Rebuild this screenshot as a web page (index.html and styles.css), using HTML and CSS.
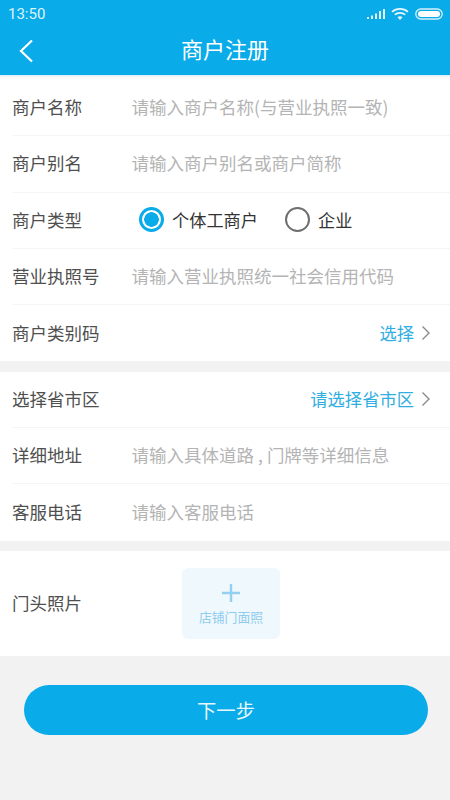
FILE: index.html
```html
<!DOCTYPE html>
<html lang="zh">
<head>
<meta charset="utf-8">
<title>商户注册</title>
<link rel="stylesheet" href="styles.css">
</head>
<body>
<header class="header">
  <div class="status">
    <span class="time">13:50</span>
    <div class="status-icons">
      <svg width="18" height="12" viewBox="0 0 18 12"><g fill="#dff3fb"><rect x="0" y="9" width="2" height="2"/><rect x="4" y="7.500" width="2" height="3.500"/><rect x="8" y="5.500" width="2" height="5.500"/><rect x="12" y="3" width="2" height="8"/><rect x="16" y="1" width="2" height="10"/></g></svg>
      <svg width="18" height="14" viewBox="0 0 18 14"><g fill="none" stroke="#e8f7fc" stroke-width="1.700"><path d="M1 4.800C5.500 .8 12.500 .8 17 4.800"/><path d="M3.800 7.700C6.700 5.200 11.300 5.200 14.200 7.700"/></g><path d="M6.500 10.300C8 9 10 9 11.500 10.300L9 13Z" fill="#e8f7fc"/></svg>
      <svg width="28" height="12" viewBox="0 0 28 12"><rect x=".8" y="1" width="26.400" height="10" rx="5" fill="none" stroke="#d5f0fa" stroke-width="1.300"/><rect x="3" y="3" width="22" height="6" rx="3" fill="#fff"/></svg>
    </div>
  </div>
  <div class="nav">
    <svg class="back" width="16" height="24" viewBox="0 0 16 24"><path d="M14 1.500 3 12l11 10.500" fill="none" stroke="#fff" stroke-width="2.200"/></svg>
    <h1 class="title">商户注册</h1>
  </div>
</header>
<div class="shade"></div>
<main>
  <section class="group">
    <div class="row"><span class="label">商户名称</span><span class="hint">请输入商户名称(与营业执照一致)</span></div>
    <div class="row"><span class="label">商户别名</span><span class="hint">请输入商户别名或商户简称</span></div>
    <div class="row">
      <span class="label">商户类型</span>
      <div class="radios">
        <span class="radio radio-on"></span><span class="radio-text">个体工商户</span>
        <span class="radio radio-off"></span><span class="radio-text">企业</span>
      </div>
    </div>
    <div class="row"><span class="label">营业执照号</span><span class="hint">请输入营业执照统一社会信用代码</span></div>
    <div class="row">
      <span class="label">商户类别码</span>
      <div class="pick"><span>选择</span><svg class="chev" width="10" height="16" viewBox="0 0 10 16"><path d="M1.500 1.500 8 8l-6.500 6.500" fill="none" stroke="#8a8a8a" stroke-width="1.400"/></svg></div>
    </div>
  </section>
  <section class="group">
    <div class="row">
      <span class="label">选择省市区</span>
      <div class="pick"><span>请选择省市区</span><svg class="chev" width="10" height="16" viewBox="0 0 10 16"><path d="M1.500 1.500 8 8l-6.500 6.500" fill="none" stroke="#8a8a8a" stroke-width="1.400"/></svg></div>
    </div>
    <div class="row"><span class="label">详细地址</span><span class="hint">请输入具体道路<span class="comma">,</span>门牌等详细信息</span></div>
    <div class="row"><span class="label">客服电话</span><span class="hint">请输入客服电话</span></div>
  </section>
  <section class="group photo">
    <span class="label">门头照片</span>
    <div class="upload">
      <svg width="18" height="18" viewBox="0 0 18 18"><path d="M9 0v18M0 9h18" stroke="#93cfee" stroke-width="2.400"/></svg>
      <span class="upload-text">店铺门面照</span>
    </div>
  </section>
  <button class="next" type="button">下一步</button>
</main>
</body>
</html>
```
FILE: styles.css
```css
* { box-sizing: border-box; }
html, body { margin: 0; padding: 0; }
body {
  width: 450px;
  height: 800px;
  overflow: hidden;
  background: #f2f2f2;
  font-family: "Noto Sans CJK SC", "Noto Sans", sans-serif;
}
.header { height: 75px; background: #09abe8; color: #fff; }
.status {
  height: 28px;
  padding: 0 7px 0 8px;
  display: flex;
  align-items: center;
  justify-content: space-between;
}
.time { font-family: Roboto, sans-serif; font-size: 15px; color: #dff3fb; }
.status-icons { display: flex; align-items: center; gap: 6px; }
.nav { height: 47px; position: relative; display: flex; align-items: center; justify-content: center; padding-bottom: 6px; }
.back { position: absolute; left: 18px; top: 11px; }
.title { margin: 0; font-size: 22px; font-weight: 400; line-height: 41px; }
.shade { height: 5px; background: linear-gradient(#d8eef8, #f8f8f8 40%, #fff); }
.group { background: #fff; margin-bottom: 10.500px; }
.row {
  height: 56.250px;
  margin-left: 12px;
  padding: 0 19px 2px 0;
  display: flex;
  align-items: center;
  border-bottom: 1px solid #f5f5f5;
}
.row:last-child { border-bottom: 0; }
.label { font-size: 17.500px; color: #4f4f4f; width: 119.500px; flex: none; }
.hint { font-size: 17.500px; color: #b4b4b4; white-space: nowrap; }
.comma { margin: 0 4px; }
.radios { display: flex; align-items: center; margin-left: 7.500px; }
.radio { width: 25px; height: 25px; border-radius: 50%; flex: none; }
.radio-on { border: 3px solid #09abe8; background: radial-gradient(circle, #09abe8 0 7px, #fff 7.500px); }
.radio-off { border: 2.500px solid #6e6e6e; margin-left: 27px; }
.radio-text { font-size: 17.200px; color: #333; margin-left: 8px; }
.pick {
  margin-left: auto;
  display: flex;
  align-items: center;
  gap: 7px;
  font-size: 17.300px;
  color: #30aee2;
}
.chev { margin-top: 2px; }
.photo {
  height: 105px;
  padding-left: 12px;
  display: flex;
  align-items: center;
  margin-bottom: 29px;
}
.photo .label { width: 170px; margin-top: -3px; }
.upload {
  width: 98px;
  height: 71px;
  margin-top: -1px;
  background: #eff8fd;
  border-radius: 6px;
  display: flex;
  flex-direction: column;
  align-items: center;
  padding-top: 16px;
}
.upload-text { font-size: 12.800px; line-height: 16px; color: #8fcdee; margin-top: 7px; }
.next {
  display: block;
  width: 404px;
  height: 50px;
  margin-left: 24px;
  border: 0;
  border-radius: 25px;
  background: #09abe8;
  color: #e6f7fd;
  font-family: inherit;
  font-size: 19.300px;
  padding: 0;
}
```
